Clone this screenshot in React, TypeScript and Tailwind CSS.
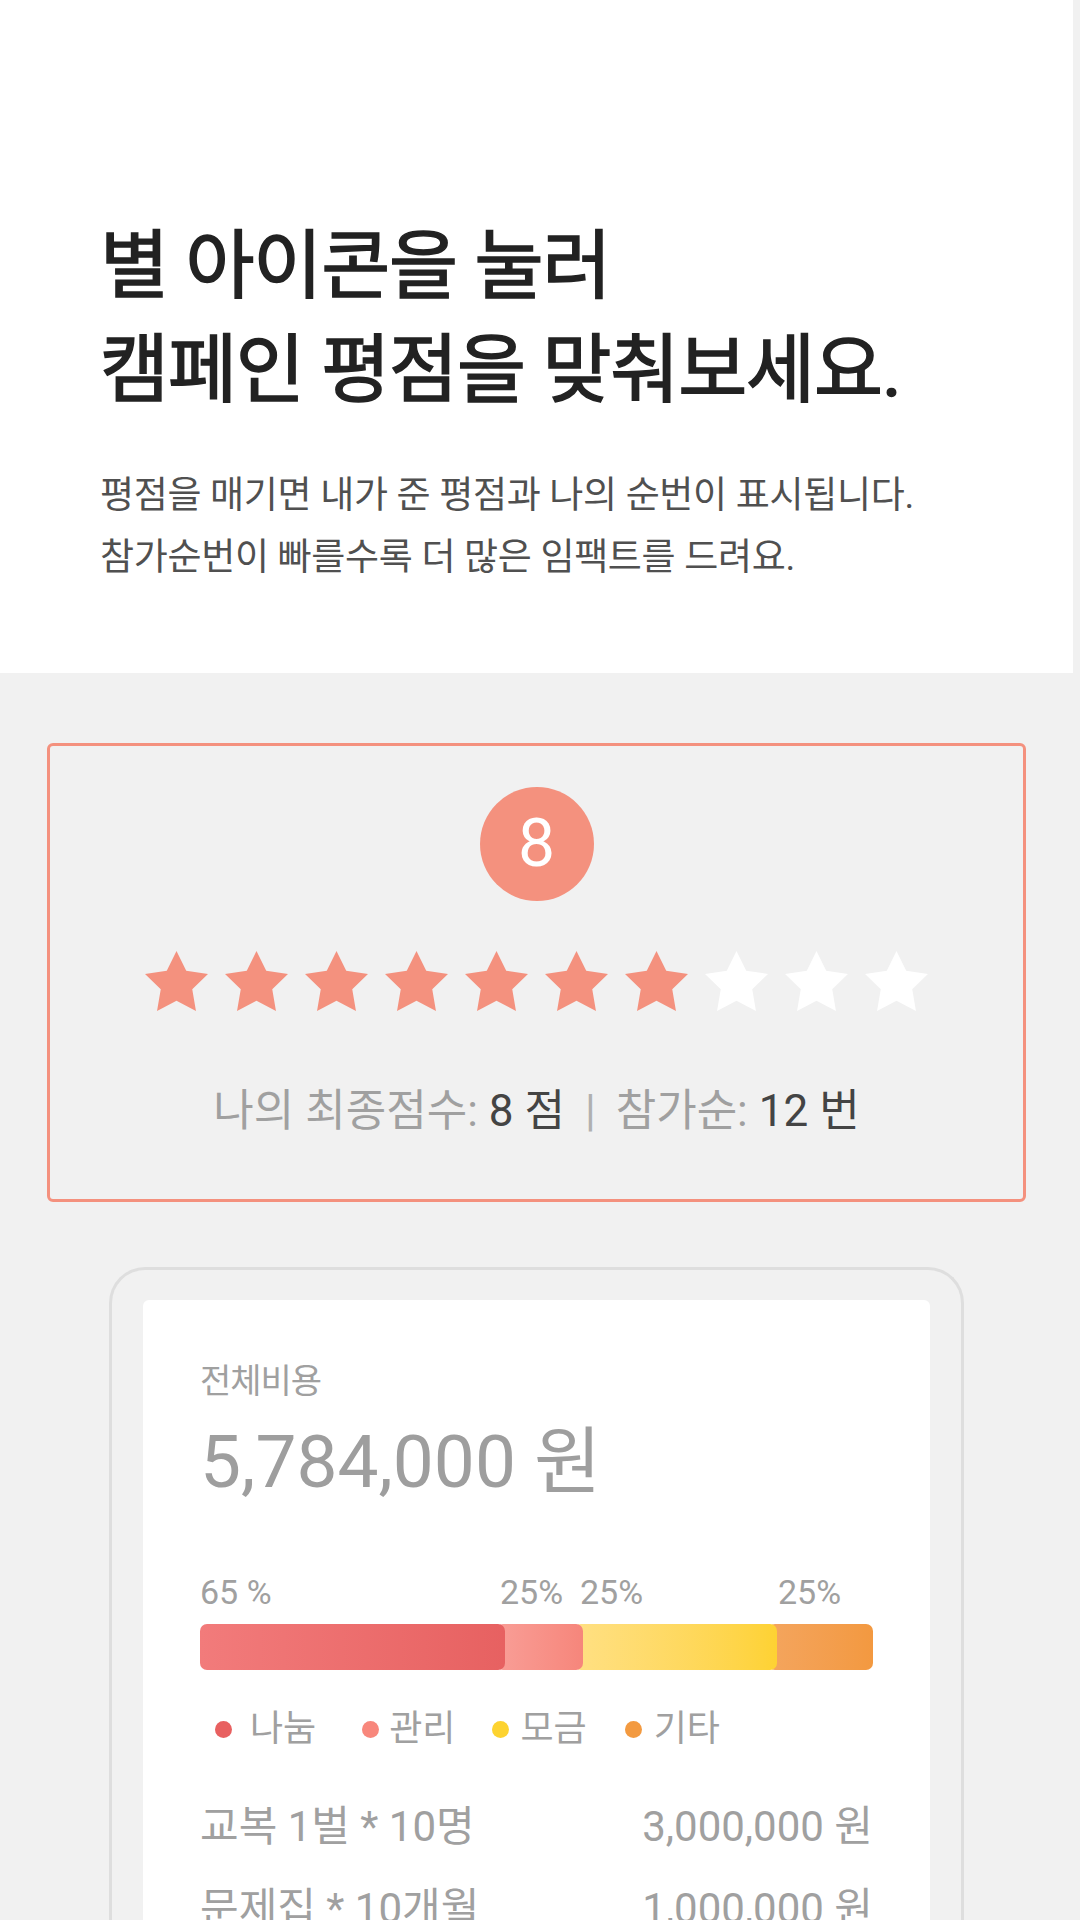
import React from "react";

const STAR = "12,2 15.09,8.26 22,9.27 17,14.14 18.18,21.02 12,17.77 5.82,21.02 7,14.14 2,9.27 8.91,8.26";

function Star({ filled }: { filled: boolean }) {
  return (
    <svg width="63" height="60" viewBox="2 2 20 19.02" className="block">
      <polygon points={STAR} fill={filled ? "#f4917e" : "#ffffff"} />
    </svg>
  );
}

export default function App() {
  const stars = [1, 2, 3, 4, 5, 6, 7, 8, 9, 10];
  return (
    <div className="min-h-screen w-[1080px] bg-[#f1f1f1] font-['Roboto','Noto_Sans_CJK_KR',sans-serif] overflow-hidden">
      <div className="w-[1073px]">
        <header className="bg-white h-[673px] pl-[100px] pt-[214px]">
          <h1 className="text-[75px] leading-[104px] tracking-[-1.1px] font-normal text-[#222222] [-webkit-text-stroke:1.5px_#222222]">
            별 아이콘을 눌러
            <br />
            캠페인 평점을 맞춰보세요.
          </h1>
          <p className="mt-[43px] text-[37px] leading-[62px] tracking-[-0.3px] text-[#505050]">
            평점을 매기면 내가 준 평점과 나의 순번이 표시됩니다.
            <br />
            참가순번이 빠를수록 더 많은 임팩트를 드려요.
          </p>
        </header>

        <section className="px-[47px] pt-[70px]">
          <div className="h-[459px] border-[3px] border-[#f4917e] rounded-[6px] flex flex-col items-center pt-[41px]">
            <div className="w-[114px] h-[114px] rounded-full bg-[#f4917e] flex items-center justify-center text-white text-[66px] leading-none font-normal">
              8
            </div>
            <div className="mt-[50px] flex gap-[17px]">
              {stars.map((s) => (
                <Star key={s} filled={s <= 7} />
              ))}
            </div>
            <div className="mt-[70px] text-[44px] leading-[60px] text-[#a0a0a0] flex items-center">
              <span>나의 최종점수:</span>
              <span className="ml-[11px] text-[#444444]">8 점</span>
              <span className="mx-[20px] text-[#b0b0b0]">|</span>
              <span>참가순:</span>
              <span className="ml-[11px] text-[#444444]">12 번</span>
            </div>
          </div>
        </section>

        <section className="px-[109px] pt-[65px]">
          <div className="border-[3px] border-b-0 border-[#dedede] rounded-t-[36px] px-[31px] pt-[30px] h-[700px]">
            <div className="bg-white rounded-[6px] px-[57px] pt-[56px] h-[700px]">
              <div className="text-[34px] leading-[50px] tracking-[-1px] text-[#a0a0a0]">전체비용</div>
              <div className="mt-[16px] text-[73px] leading-[80px] text-[#9e9e9e]">5,784,000 원</div>

              <div className="mt-[70px] flex text-[34px] leading-[40px] text-[#a0a0a0]">
                <div className="w-[300px]">65 %</div>
                <div className="w-[80px]">25%</div>
                <div className="w-[198px]">25%</div>
                <div>25%</div>
              </div>
              <div className="mt-[12px] flex h-[46px]">
                <div className="relative z-40 w-[306px] rounded-[7px] bg-gradient-to-r from-[#f27b7b] to-[#e76161]" />
                <div className="relative z-30 -ml-[9px] w-[87px] rounded-[7px] bg-gradient-to-r from-[#f99e97] to-[#f6867b]" />
                <div className="relative z-20 -ml-[9px] w-[204px] rounded-[7px] bg-gradient-to-r from-[#ffe083] to-[#fed232]" />
                <div className="relative z-10 -ml-[9px] w-[105px] rounded-[7px] bg-gradient-to-r from-[#f4a55e] to-[#f39940]" />
              </div>

              <div className="mt-[34px] ml-[15px] flex items-center text-[36px] leading-[50px] text-[#a0a0a0]">
                <span className="w-[17px] h-[17px] rounded-full bg-[#e86060]" />
                <span className="ml-[18px]">나눔</span>
                <span className="ml-[46px] w-[17px] h-[17px] rounded-full bg-[#f8877c]" />
                <span className="ml-[10px]">관리</span>
                <span className="ml-[36px] w-[17px] h-[17px] rounded-full bg-[#fdd330]" />
                <span className="ml-[12px]">모금</span>
                <span className="ml-[38px] w-[17px] h-[17px] rounded-full bg-[#f39a40]" />
                <span className="ml-[12px]">기타</span>
              </div>

              <div className="mt-[32px] flex flex-col text-[42px] leading-[82px] text-[#a0a0a0]">
                <div className="flex justify-between">
                  <span>교복 1벌 * 10명</span>
                  <span>3,000,000 원</span>
                </div>
                <div className="flex justify-between">
                  <span>문제집 * 10개월</span>
                  <span>1,000,000 원</span>
                </div>
                <div className="flex justify-between">
                  <span>기타</span>
                  <span>1,784,000 원</span>
                </div>
              </div>
            </div>
          </div>
        </section>
      </div>
    </div>
  );
}
